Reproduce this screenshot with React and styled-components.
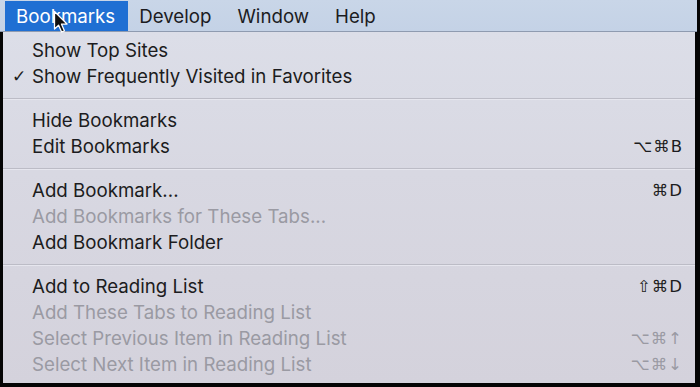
import React from "react";
import styled, { createGlobalStyle } from "styled-components";

// menu data
const sections = [
  [
    { label: "Show Top Sites" },
    { label: "Show Frequently Visited in Favorites", checked: true },
  ],
  [
    { label: "Hide Bookmarks" },
    { label: "Edit Bookmarks", keys: "⌥⌘B" },
  ],
  [
    { label: "Add Bookmark...", keys: "⌘D" },
    { label: "Add Bookmarks for These Tabs...", disabled: true },
    { label: "Add Bookmark Folder" },
  ],
  [
    { label: "Add to Reading List", keys: "⇧⌘D" },
    { label: "Add These Tabs to Reading List", disabled: true },
    { label: "Select Previous Item in Reading List", keys: "⌥⌘↑", disabled: true },
    { label: "Select Next Item in Reading List", keys: "⌥⌘↓", disabled: true },
  ],
];

const menus = ["Bookmarks", "Develop", "Window", "Help"];

const App = () => {
  return (
    <>
      <GlobalStyle />
      <Screen>
        <MenuBar>
          {menus.map((name, i) => (
            <BarItem key={name} active={i === 0}>
              {name}
            </BarItem>
          ))}
          <Cursor width="16" height="24" viewBox="0 0 16 24">
            <path
              d="M1.5 1.5 L1.5 19 L5.6 15.2 L8.6 22 L11.4 20.8 L8.5 14.2 L14 14 Z"
              fill="#111"
              stroke="#fff"
              strokeWidth="1.3"
              strokeLinejoin="round"
            />
          </Cursor>
        </MenuBar>
        <Panel>
          {sections.map((items, s) => (
            <Section key={s} first={s === 0}>
              {items.map((item) => (
                <Row key={item.label} disabled={item.disabled}>
                  <Check>{item.checked ? "✓" : ""}</Check>
                  <Label>{item.label}</Label>
                  {item.keys && <Keys>{item.keys}</Keys>}
                </Row>
              ))}
            </Section>
          ))}
        </Panel>
      </Screen>
    </>
  );
};

const GlobalStyle = createGlobalStyle`
  html, body {
    margin: 0;
    padding: 0;
    background: #000;
  }
`;

const Screen = styled.div`
  width: 700px;
  height: 387px;
  background: #050505;
  display: flex;
  flex-direction: column;
  font-family: Inter, "Liberation Sans", Arial, sans-serif;
  overflow: hidden;
`;

const MenuBar = styled.div`
  position: relative;
  height: 30px;
  margin-right: 3px;
  display: flex;
  align-items: stretch;
  padding: 1px 0 0 5px;
  background: linear-gradient(#c9d6e8, #c4d2e6);
  border-bottom: 1px solid #8f9bb0;
`;

const BarItem = styled.div`
  display: flex;
  align-items: center;
  padding: 0 13px 0 11px;
  margin-right: ${(p) => (p.active ? "0" : "2px")};
  font-size: 18.7px;
  color: ${(p) => (p.active ? "#fff" : "#1c1c1f")};
  background: ${(p) => (p.active ? "#1f6fd3" : "transparent")};
`;

const Cursor = styled.svg`
  position: absolute;
  left: 53px;
  top: 10px;
`;

const Panel = styled.div`
  flex: 1;
  margin: 0 5px 4px 3px;
  padding: 5px 0 6px;
  background: linear-gradient(180deg, #dcdee8 0%, #d8d8e2 40%, #d4d2dc 100%);
`;

const Section = styled.div`
  ${(p) =>
    !p.first &&
    `
    margin-top: 9px;
    padding-top: 8px;
    border-top: 1px solid #bcbcc6;
    box-shadow: inset 0 1px 0 #e6e6ee;
  `}
`;

const Row = styled.div`
  height: 26px;
  display: flex;
  align-items: center;
  padding-right: 12px;
  font-size: 18.7px;
  color: ${(p) => (p.disabled ? "#9a9aa3" : "#1c1c20")};
`;

const Check = styled.span`
  width: 29px;
  padding-left: 9px;
  box-sizing: border-box;
  font-family: "DejaVu Sans", sans-serif;
  font-size: 17px;
  color: #1c1c20;
`;

const Label = styled.span`
  flex: 1;
  white-space: nowrap;
`;

const Keys = styled.span`
  font-family: "DejaVu Sans", sans-serif;
  font-size: 16.5px;
  letter-spacing: 1px;
`;

export default App;
